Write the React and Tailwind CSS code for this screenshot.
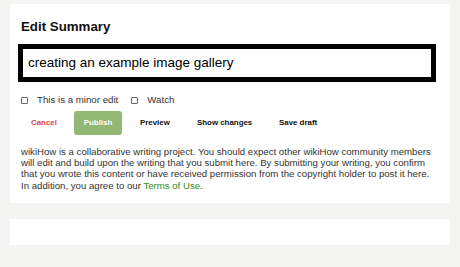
import React from 'react';

export default function App() {
  return (
    <div className="w-[460px] h-[267px] bg-[#f4f4f2] pt-[4px] pl-[10px] overflow-hidden font-['Liberation_Sans',Arial,sans-serif] text-[#222]">
      <div className="w-[440px] h-[199px] bg-white pt-[14px] pl-[11px] pr-[14px]">
        <h2 className="text-[13.3px] font-bold leading-[18px] text-[#111]">Edit Summary</h2>
        <div className="mt-[8px] -ml-[3px] w-[418px] h-[38px] border-[5px] border-black flex items-center pl-[5px]">
          <span className="text-[13.5px] leading-[18px] text-black">creating an example image gallery</span>
        </div>
        <div className="mt-[12px] flex items-center text-[9.7px] leading-[12px] text-[#333]">
          <span className="w-[7px] h-[7px] border border-[#666] rounded-[1px] mr-[9px]"></span>
          <span>This is a minor edit</span>
          <span className="w-[7px] h-[7px] border border-[#666] rounded-[1px] ml-[13px] mr-[9px]"></span>
          <span>Watch</span>
        </div>
        <div className="mt-[5px] flex items-center text-[7.9px] font-bold">
          <span className="w-[53px] pl-[10px] text-[#e3414b]">Cancel</span>
          <span className="w-[48px] h-[24px] rounded-[3px] bg-[#93b874] text-white flex items-center justify-center">Publish</span>
          <span className="ml-[18px] w-[57px] text-[#111]">Preview</span>
          <span className="w-[82px] text-[#111]">Show changes</span>
          <span className="text-[#111]">Save draft</span>
        </div>
        <p className="mt-[11px] text-[9.65px] leading-[11.2px] text-[#333] w-[416px]">
          wikiHow is a collaborative writing project. You should expect other wikiHow community members<br />
          will edit and build upon the writing that you submit here. By submitting your writing, you confirm<br />
          that you wrote this content or have received permission from the copyright holder to post it here.<br />
          In addition, you agree to our <span className="text-[#2e8b21]">Terms of Use</span>.
        </p>
      </div>
      <div className="mt-[16px] w-[440px] h-[26px] bg-white"></div>
    </div>
  );
}
